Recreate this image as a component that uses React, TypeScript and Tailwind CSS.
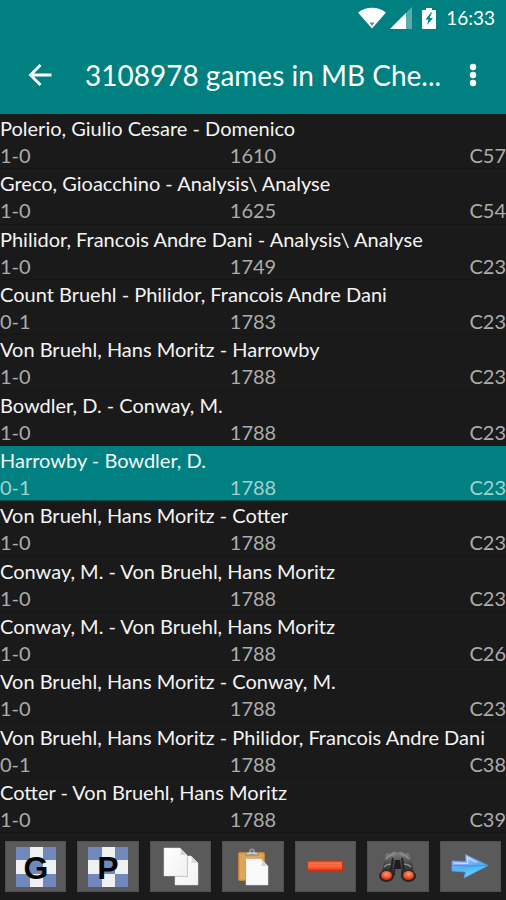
import clsx from "clsx";
import type { ReactNode } from "react";
import { useState } from "react";

type Game = {
  players: string;
  result: string;
  year: string;
  eco: string;
};

const games: Game[] = [
  { players: "Polerio, Giulio Cesare - Domenico", result: "1-0", year: "1610", eco: "C57" },
  { players: "Greco, Gioacchino - Analysis\\ Analyse", result: "1-0", year: "1625", eco: "C54" },
  { players: "Philidor, Francois Andre Dani - Analysis\\ Analyse", result: "1-0", year: "1749", eco: "C23" },
  { players: "Count Bruehl - Philidor, Francois Andre Dani", result: "0-1", year: "1783", eco: "C23" },
  { players: "Von Bruehl, Hans Moritz - Harrowby", result: "1-0", year: "1788", eco: "C23" },
  { players: "Bowdler, D. - Conway, M.", result: "1-0", year: "1788", eco: "C23" },
  { players: "Harrowby - Bowdler, D.", result: "0-1", year: "1788", eco: "C23" },
  { players: "Von Bruehl, Hans Moritz - Cotter", result: "1-0", year: "1788", eco: "C23" },
  { players: "Conway, M. - Von Bruehl, Hans Moritz", result: "1-0", year: "1788", eco: "C23" },
  { players: "Conway, M. - Von Bruehl, Hans Moritz", result: "1-0", year: "1788", eco: "C26" },
  { players: "Von Bruehl, Hans Moritz - Conway, M.", result: "1-0", year: "1788", eco: "C23" },
  { players: "Von Bruehl, Hans Moritz - Philidor, Francois Andre Dani", result: "0-1", year: "1788", eco: "C38" },
  { players: "Cotter - Von Bruehl, Hans Moritz", result: "1-0", year: "1788", eco: "C39" },
];

function StatusBar() {
  return (
    <div className="flex h-9 items-center justify-end pr-[11px] text-[19px]">
      <svg viewBox="0 0 28 22" className="mr-1 h-[22px] w-7" aria-hidden="true">
        <path d="M14 21.500 0 5.500C4 2.500 8.500 0.800 14 0.800s10 1.700 14 4.700z" fill="#fff" />
        <path d="M11.500 15.500h5L14 19z" fill="#6b7f80" />
      </svg>
      <svg viewBox="0 0 22 22" className="mr-[10px] h-[22px] w-[22px]" aria-hidden="true">
        <path d="M22 0v22H0z" fill="#5aabab" />
        <path d="M16 6v16H0z" fill="#fff" />
      </svg>
      <svg viewBox="0 0 14 21" className="mr-[10px] h-[21px] w-[14px]" aria-hidden="true">
        <path d="M4 0h6v2h3q1 0 1 1v17q0 1-1 1H1q-1 0-1-1V3q0-1 1-1h3z" fill="#fff" />
        <path d="M9 4.500 3.500 11.500h3L5 17l6-7H7.500L10 4.500z" fill="#008080" />
      </svg>
      <span>16:33</span>
    </div>
  );
}

function AppBar() {
  return (
    <div className="flex h-[78px] items-center pr-[21px] pl-7">
      <button type="button" aria-label="Back" className="mr-[33px] cursor-pointer">
        <svg viewBox="0 0 24 24" className="h-6 w-6" fill="none" stroke="#fff" strokeWidth="2.800" aria-hidden="true">
          <path d="M23.500 12H3M12.500 2 2.500 12l10 10" />
        </svg>
      </button>
      <h1 className="flex-1 truncate text-[28px] leading-9">3108978 games in MB Che...</h1>
      <button type="button" aria-label="More options" className="cursor-pointer">
        <svg viewBox="0 0 24 24" className="h-6 w-6" fill="#fff" aria-hidden="true">
          <circle cx="12" cy="4" r="3.200" />
          <circle cx="12" cy="12" r="3.200" />
          <circle cx="12" cy="20" r="3.200" />
        </svg>
      </button>
    </div>
  );
}

type GameRowProps = {
  game: Game;
  selected: boolean;
  onSelect: () => void;
};

function GameRow({ game, selected, onSelect }: GameRowProps) {
  return (
    <li className="grid">
      <button
        type="button"
        aria-pressed={selected}
        onClick={onSelect}
        className={clsx(
          "cursor-pointer border-b text-left text-[20px]",
          selected ? "border-[#0a4a4a] bg-[#008080]" : "border-[#151515]"
        )}
      >
        <span className="block truncate leading-7 text-[#f4f4f4]">{game.players}</span>
        <span
          className={clsx(
            "grid grid-cols-3 leading-[26px]",
            selected ? "text-[#a3d0d0]" : "text-[#acacac]"
          )}
        >
          <span>{game.result}</span>
          <span className="text-center">{game.year}</span>
          <span className="text-right">{game.eco}</span>
        </span>
      </button>
    </li>
  );
}

function BoardIcon({ letter }: { letter: string }) {
  return (
    <svg viewBox="0 0 40 40" className="h-10 w-10" aria-hidden="true">
      <rect width="40" height="40" fill="#7088bc" />
      <path d="M14 0h13v40H14zM0 13h40v14H0z" fill="#eef0f3" />
      <rect x="14" y="13" width="13" height="14" fill="#7088bc" />
      <text
        x="20"
        y="32"
        textAnchor="middle"
        fontFamily="'Liberation Sans', sans-serif"
        fontWeight="700"
        fontSize="32"
        fill="#050505"
      >
        {letter}
      </text>
    </svg>
  );
}

function CopyIcon() {
  return (
    <svg viewBox="0 0 40 40" className="h-10 w-10" aria-hidden="true">
      <defs>
        <linearGradient id="paper" x1="0" y1="0" x2="1" y2="1">
          <stop offset="0" stopColor="#ffffff" />
          <stop offset="1" stopColor="#f1f1f1" />
        </linearGradient>
      </defs>
      <path d="M14 9h16l7 7v22H14z" fill="url(#paper)" stroke="#dcdcdc" strokeWidth="0.500" />
      <path d="M30 9q2 4 0 7h7z" fill="#dadada" />
      <path d="M4 2h16l7 8v20H4z" fill="#4a4a4a" opacity="0.300" />
      <path d="M3 1h16l7 7v21H3z" fill="url(#paper)" stroke="#dcdcdc" strokeWidth="0.500" />
      <path d="M19 1q2 4 0 7h7z" fill="#d4d4d4" />
    </svg>
  );
}

function PasteIcon() {
  return (
    <svg viewBox="0 0 40 40" className="h-10 w-10" aria-hidden="true">
      <rect x="5.500" y="5.500" width="26" height="28" rx="1" fill="#d69a4c" stroke="#c0853a" />
      <rect x="7" y="7" width="23" height="25" fill="#dea65a" />
      <path d="M12 9V7q0-1 2-1.500l2-.5q0-3.500 3-3.500t3 3.500l2 .5q2 .500 2 1.500v2z" fill="#96989b" />
      <path d="M14 7q5-2 10 0" stroke="#cfd1d3" strokeWidth="1.500" fill="none" />
      <circle cx="19" cy="4" r="1.200" fill="#606265" />
      <path d="M12 13h17l7 7v18H12z" fill="#7d5a2c" opacity="0.300" />
      <path d="M13 12h15l7 7v19H13z" fill="#fafafa" stroke="#dcdcdc" strokeWidth="0.500" />
      <path d="M28 12q2 4 0 7h7z" fill="#d4d4d4" />
    </svg>
  );
}

function MinusIcon() {
  return (
    <svg viewBox="0 0 40 40" className="h-10 w-10" aria-hidden="true">
      <defs>
        <linearGradient id="minus" x1="0" y1="0" x2="0" y2="1">
          <stop offset="0" stopColor="#f0542a" />
          <stop offset="0.500" stopColor="#fb6a3c" />
          <stop offset="0.800" stopColor="#e8421e" />
          <stop offset="1" stopColor="#b81a08" />
        </linearGradient>
      </defs>
      <rect x="2.500" y="14" width="35" height="10.500" rx="1" fill="url(#minus)" stroke="#c8321a" />
      <path d="M4 16h32" stroke="#fb7c54" />
    </svg>
  );
}

function BinocularsIcon() {
  return (
    <svg viewBox="0 0 40 40" className="h-10 w-10" aria-hidden="true">
      <defs>
        <linearGradient id="barrel" x1="0" y1="0" x2="0" y2="1">
          <stop offset="0" stopColor="#858585" />
          <stop offset="0.450" stopColor="#474747" />
          <stop offset="1" stopColor="#151515" />
        </linearGradient>
        <radialGradient id="lens" cx="0.500" cy="0.350" r="0.650">
          <stop offset="0" stopColor="#ffa078" />
          <stop offset="0.600" stopColor="#f4512a" />
          <stop offset="1" stopColor="#b52a12" />
        </radialGradient>
      </defs>
      <path
        d="M7 9l2-3 3 1q3-3 6-2l1.500 1L21 5q3-1 6 2l3-1 2 3q3 6 3 12l1 6-5 5-8-4q1-5-1-9l-2-5-2 5q-1 4-1 9l-7 4-7-5 2-6q0-6 2-12z"
        fill="url(#barrel)"
      />
      <path d="M17 13h5l1 9h-7z" fill="#1c1c1c" />
      <path d="M8 12q3-4 9-5M22 7q6 1 9 5M6 20q4-4 9-2M24 18q5-2 9 2" stroke="#8f8f8f" strokeWidth="1.500" fill="none" />
      <path d="M15 11l-2 12M24 11l2 12" stroke="#232323" strokeWidth="2" />
      <ellipse cx="8.500" cy="29" rx="7.500" ry="6" fill="#252525" />
      <ellipse cx="30.500" cy="29" rx="7.500" ry="6" fill="#252525" />
      <ellipse cx="8.500" cy="28.500" rx="5.500" ry="4.500" fill="url(#lens)" />
      <ellipse cx="30.500" cy="28.500" rx="5.500" ry="4.500" fill="url(#lens)" />
    </svg>
  );
}

function ArrowIcon() {
  return (
    <svg viewBox="0 0 40 40" className="h-10 w-10" aria-hidden="true">
      <defs>
        <linearGradient id="arrow" x1="0" y1="0" x2="0.300" y2="1">
          <stop offset="0" stopColor="#c2d6fb" />
          <stop offset="0.450" stopColor="#7fb0f6" />
          <stop offset="0.600" stopColor="#4fb0f6" />
          <stop offset="1" stopColor="#62dcfd" />
        </linearGradient>
      </defs>
      <path
        d="M2 14l14 .5L15.500 7.500 38 18.500 14 31l1.500-6L2 24z"
        fill="url(#arrow)"
        stroke="#5a9cec"
        strokeWidth="0.800"
        strokeLinejoin="round"
      />
      <path d="M2.500 18.500 18 19l19-.5" stroke="#3f8ae6" fill="none" />
      <path d="M4 16l14 .5-1-6 10 5" stroke="#d8e4ff" fill="none" />
    </svg>
  );
}

type ToolButtonProps = {
  label: string;
  children: ReactNode;
};

function ToolButton({ label, children }: ToolButtonProps) {
  return (
    <button
      type="button"
      aria-label={label}
      className="flex h-[51px] flex-1 cursor-pointer items-center justify-center border border-[#505051] bg-[#5a5a5b]"
    >
      {children}
    </button>
  );
}

export default function App() {
  const [selected, setSelected] = useState(6);

  return (
    <div className="flex min-h-screen flex-col bg-[#1a1a1a] font-['Lato',sans-serif] text-white">
      <header className="bg-[#008080]">
        <StatusBar />
        <AppBar />
      </header>
      <ul className="grid flex-1 auto-rows-fr">
        {games.map((game, index) => (
          <GameRow
            key={index}
            game={game}
            selected={index === selected}
            onSelect={() => setSelected(index)}
          />
        ))}
      </ul>
      <footer className="flex gap-[11px] px-[5px] py-2">
        <ToolButton label="Games">
          <BoardIcon letter="G" />
        </ToolButton>
        <ToolButton label="Position">
          <BoardIcon letter="P" />
        </ToolButton>
        <ToolButton label="Copy">
          <CopyIcon />
        </ToolButton>
        <ToolButton label="Paste">
          <PasteIcon />
        </ToolButton>
        <ToolButton label="Delete">
          <MinusIcon />
        </ToolButton>
        <ToolButton label="Search">
          <BinocularsIcon />
        </ToolButton>
        <ToolButton label="Next">
          <ArrowIcon />
        </ToolButton>
      </footer>
    </div>
  );
}
